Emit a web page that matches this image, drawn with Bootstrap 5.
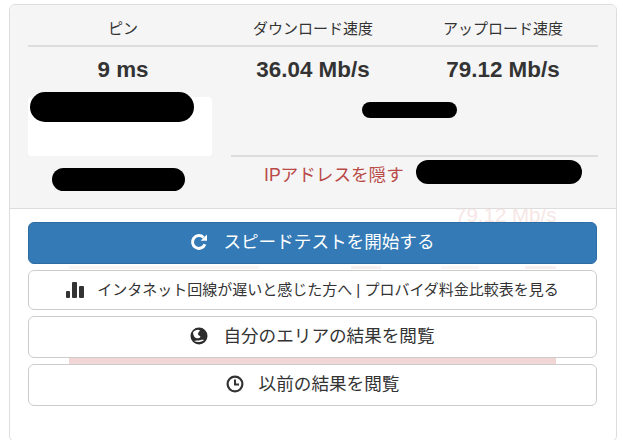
<!DOCTYPE html>
<html lang="ja">
<head>
  <meta charset="UTF-8">
  <meta name="viewport" content="width=device-width, initial-scale=1">
  <title>スピードテスト</title>
  <link rel="stylesheet" href="https://cdn.jsdelivr.net/npm/bootstrap@5.3.0/dist/css/bootstrap.min.css">
  <style>
    body {
      background: #fff;
      color: #333;
      font-family: "Liberation Sans", "Noto Sans CJK JP", sans-serif;
      overflow: hidden;
    }
    .speed-panel {
      margin: 4px 6px 0 9px;
      height: 438px;
      border: 1px solid #ddd;
      border-radius: 6px;
      overflow: hidden;
      position: relative;
    }
    /* grey result area */
    .result-head {
      position: relative;
      z-index: 1;
      height: 204px;
      padding: 0 18px;
      background: #f5f5f5;
      border-bottom: 1px solid #ddd;
    }
    .label-row {
      height: 42px;
      border-bottom: 2px solid #ddd;
      font-size: 15px;
      padding-top: 14px;
      line-height: 20px;
    }
    .value-row {
      font-size: 22.4px;
      font-weight: 700;
      line-height: 26px;
      padding-top: 10px;
    }
    .isp-box {
      height: 59px;
      width: 184px;
      margin-top: 14px;
      background: #fff;
      border-radius: 4px;
      position: relative;
    }
    .redact {
      background: #000;
      border-radius: 16px;
    }
    .redact-isp {
      position: absolute;
      left: 2px;
      top: -5px;
      width: 164px;
      height: 30px;
    }
    .redact-loc {
      width: 133px;
      height: 23px;
      margin: 12px 0 0 24px;
    }
    .redact-host {
      width: 95px;
      height: 16px;
      margin: 19px 0 0 144px;
    }
    .redact-ip {
      width: 166px;
      height: 24px;
      flex: none;
    }
    .ip-row {
      margin: 37px 0 0 13px;
      border-top: 2px solid #ddd;
      padding-top: 3px;
      padding-left: 33px;
      gap: 12px;
    }
    .ip-hide {
      color: #b94a48;
      font-size: 17.6px;
      line-height: 26px;
      margin-top: 2px;
      white-space: nowrap;
    }
    /* buttons */
    .action-area {
      padding: 13px 19px 0 18px;
      position: relative;
      height: 233px;
    }
    /* page content showing through behind the buttons */
    .ghost-speed {
      position: absolute;
      left: 445px;
      top: -1px;
      color: #f7e6e6;
      font-size: 20.5px;
      line-height: 13px;
      white-space: nowrap;
    }
    .ghost-marks {
      position: absolute;
      left: 59px;
      top: 57px;
      width: 487px;
      height: 3px;
      background: linear-gradient(90deg, #f9f5f5 0 190px, transparent 190px 282px, #f8f0f0 282px 312px, transparent 312px 372px, #f9f5f5 372px 410px, transparent 410px 456px, #f8f0f0 456px 487px);
    }
    .ghost-band {
      position: absolute;
      left: 59px;
      width: 487px;
      top: 148px;
      height: 7px;
      background: #f2d5d5;
    }
    .act-btn {
      position: relative;
      display: flex;
      align-items: center;
      justify-content: center;
      gap: 15px;
      height: 42px;
      margin-bottom: 6px;
      padding: 0 0 2px;
      font-size: 17.6px;
      color: #333;
      background: #fff;
      border: 1px solid #ccc;
      border-radius: 6px;
    }
    .act-btn.is-start {
      color: #fff;
      background: #337ab7;
      border-color: #2e6da4;
    }
    .act-btn.is-compare {
      height: 40px;
      padding: 0;
      font-size: 15px;
      gap: 13px;
    }
    .act-btn svg {
      flex: none;
    }
  </style>
</head>
<body>
<div class="speed-panel">

  <!-- results -->
  <div class="result-head">
    <div class="row g-0 text-center label-row">
      <div class="col-4">ピン</div>
      <div class="col-4">ダウンロード速度</div>
      <div class="col-4">アップロード速度</div>
    </div>
    <div class="row g-0 text-center value-row">
      <div class="col-4">9 ms</div>
      <div class="col-4">36.04 Mb/s</div>
      <div class="col-4">79.12 Mb/s</div>
    </div>
    <div class="row g-0">
      <div class="col-4">
        <div class="isp-box"><div class="redact redact-isp"></div></div>
        <div class="redact redact-loc"></div>
      </div>
      <div class="col-8">
        <div class="redact redact-host"></div>
        <div class="d-flex ip-row">
          <span class="ip-hide">IPアドレスを隠す</span>
          <div class="redact redact-ip"></div>
        </div>
      </div>
    </div>
  </div>

  <!-- actions -->
  <div class="action-area">
    <div class="ghost-speed">79.12 Mb/s</div>
    <div class="ghost-marks"></div>
    <div class="ghost-band"></div>
    <button type="button" class="act-btn is-start w-100">
      <svg width="18" height="18" viewBox="0 0 18 18" fill="none"><path d="M14.900 11.200A6.400 6.400 0 1 1 13.500 4.500" stroke="#fff" stroke-width="3"/><path d="M10.600 7.800 17 7.800 17 1.400Z" fill="#fff"/></svg>
      <span>スピードテストを開始する</span>
    </button>
    <button type="button" class="act-btn is-compare w-100">
      <svg width="18" height="16" viewBox="0 0 18 16" fill="#333"><rect x="0" y="9" width="4" height="7" rx="1"/><rect x="6" y="0" width="5" height="16" rx="1"/><rect x="13" y="4" width="5" height="12" rx="1"/></svg>
      <span>インタネット回線が遅いと感じた方へ | プロバイダ料金比較表を見る</span>
    </button>
    <button type="button" class="act-btn w-100">
      <svg width="18" height="18" viewBox="0 0 18 18"><circle cx="9" cy="9" r="8.500" fill="#2c2c2c"/><path d="M3 5.500C5 2.500 8.500 2 10 3.500 9 5 8 5.500 8 7c0 1.500 2 1.500 2.500 3C9 12 6 11.500 4.500 10 3.500 8.500 3 7 3 5.500Z" fill="#fff"/><path d="M4 14c3 1.500 7 1.500 10-1-2-.5-3.500.5-5 .5S5.500 13 4 14Z" fill="#fff"/></svg>
      <span>自分のエリアの結果を閲覧</span>
    </button>
    <button type="button" class="act-btn w-100">
      <svg width="18" height="18" viewBox="0 0 18 18" fill="none"><circle cx="9" cy="9" r="7.400" stroke="#333" stroke-width="2.200"/><path d="M9 4.500V9.500H13" stroke="#333" stroke-width="2"/></svg>
      <span>以前の結果を閲覧</span>
    </button>
  </div>
</div>
<script src="https://cdn.jsdelivr.net/npm/bootstrap@5.3.0/dist/js/bootstrap.bundle.min.js"></script>
</body>
</html>
